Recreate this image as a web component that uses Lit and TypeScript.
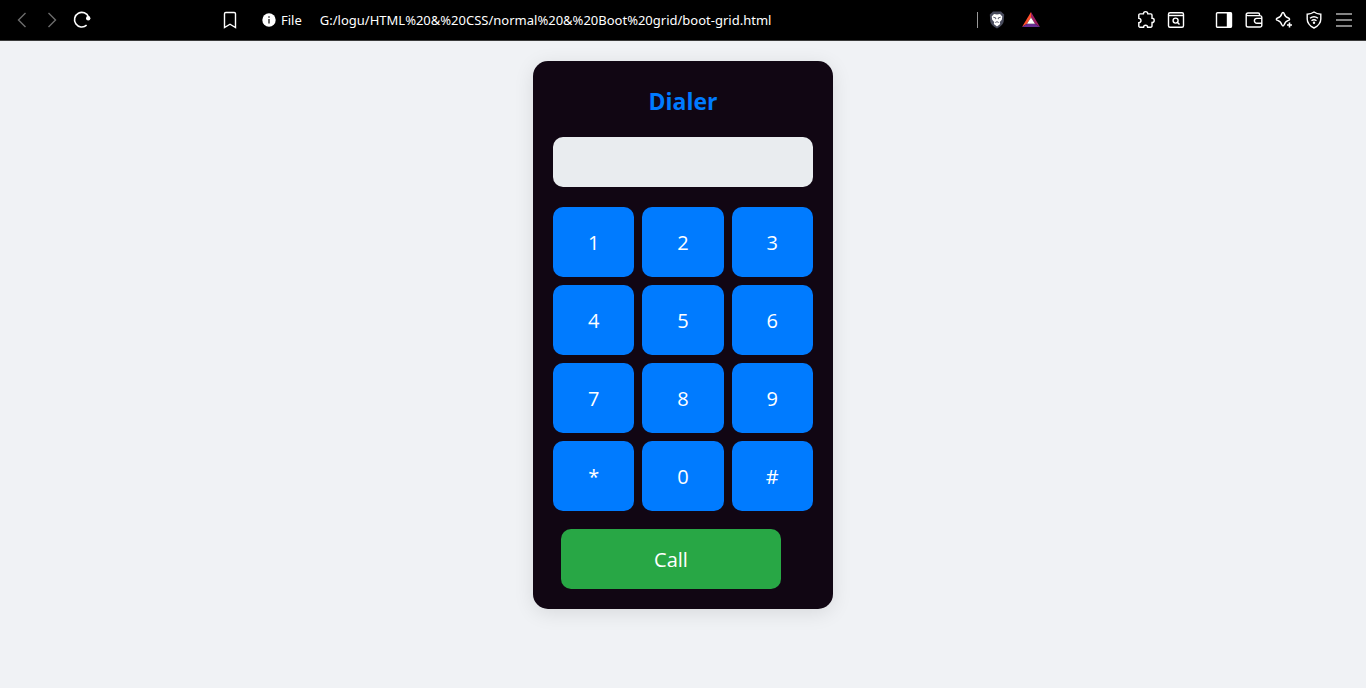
import { LitElement, html, css, svg } from "lit";
import { customElement, state } from "lit/decorators.js";

const icons = {
  back: svg`<path d="M13.500 3 6.500 10l7 7" stroke="#6c6c6c"/>`,
  forward: svg`<path d="m6.500 3 7 7-7 7" stroke="#6c6c6c"/>`,
  reload: svg`<path d="M14.6 15.2A7.3 7.3 0 1 1 16.6 7" stroke-width="1.6"/><circle cx="16.200" cy="8.200" r="2.200" fill="#fff" stroke="none"/>`,
  bookmark: svg`<path d="M4.5 3.8a1.3 1.3 0 0 1 1.3-1.3h8.4a1.3 1.3 0 0 1 1.3 1.3v13.7L10 14.2l-5.5 3.3z"/>`,
  extensions: svg`<path d="M4 3.900h3.400c0-1.400.8-2.300 2.200-2.300s2.200.9 2.200 2.300h3a1.200 1.200 0 0 1 1.200 1.200v3.200c1.400 0 2.200.9 2.200 2.100s-.8 2.100-2.200 2.100v3.500a1.200 1.200 0 0 1-1.200 1.200h-3.200c0-1.200-.7-2-2-2s-2 .8-2 2H4A1.200 1.200 0 0 1 2.800 16v-3.300c1.400 0 2.200-.9 2.200-2.100s-.8-2.200-2.200-2.200V5.100A1.200 1.200 0 0 1 4 3.900z"/>`,
  search: svg`<rect x="2.500" y="2.700" width="15" height="14.600" rx="1.500"/><path d="M2.500 5.500h15"/><circle cx="9.600" cy="10.600" r="2.500"/><path d="m11.500 12.500 2 2"/>`,
  sidebar: svg`<rect x="2.500" y="2.700" width="15" height="14.600" rx="1"/><path d="M13.500 3.500h3.500v13h-3.500z" fill="#fff"/>`,
  wallet: svg`<path d="M15.500 5.600V4.300a1.300 1.300 0 0 0-1.300-1.300H4a1.800 1.800 0 0 0-1.800 1.800v10.400A1.800 1.800 0 0 0 4 17h12a1.800 1.800 0 0 0 1.800-1.800V7.400A1.800 1.800 0 0 0 16 5.600H4A1.600 1.600 0 0 1 2.300 4.600M17.800 8.400h-5a2.400 2.400 0 0 0 0 4.800h5"/>`,
  leo: svg`<path d="M9 2.500c.7 0 1 .5 1.200 1.200.7 2.500 1.700 3.500 4.200 4.300.8.300 1.200.6 1.200 1.200s-.4 1-1.200 1.200c-2.500.8-3.500 1.800-4.200 4.300C10 15.500 9.700 16 9 16s-1-.500-1.200-1.300c-.7-2.500-1.700-3.500-4.200-4.300C2.700 10.200 2.300 9.800 2.300 9.200S2.700 8.300 3.600 8c2.500-.8 3.500-1.800 4.200-4.300C8 3 8.300 2.500 9 2.500z"/><path d="M15.500 12v6M12.500 15h6" stroke="#000" stroke-width="4"/><path d="M15.500 12.500v5M13 15h5" stroke-width="1.600"/>`,
  vpn: svg`<path d="M10 2c2 1.500 4 2 6.800 2.200V9c0 4-2.400 6.800-6.800 9-4.400-2.200-6.800-5-6.800-9V4.200C6 4 8 3.500 10 2z"/><path d="M6 8.300c2.500-2 5.500-2 8 0M7.500 10.700c1.600-1.300 3.400-1.300 5 0"/><circle cx="10" cy="12.800" r="1.200" fill="#fff" stroke="none"/>`,
  menu: svg`<path d="M2 4h16M2 10h16M2 16h16" stroke="#b0b0b0" stroke-width="1.600"/>`,
  shields: svg`<path d="M6 1.500h8l1.500 1.500 1.700 1.500-.5 7c-.4 2.200-2.200 4.500-6.700 7-4.500-2.500-6.300-4.800-6.700-7l-.5-7L4.500 3z" fill="#484b5c" stroke="none"/><path d="m7 4 3 .6L13 4l2.300 2.500-.5 3.200-2 2.400.4 1.800-3.200 2.600-3.200-2.600.4-1.800-2-2.400-.5-3.200z" fill="#fff" stroke="none"/><path d="m6.300 7.200 2.600.8-.4 1.200M13.700 7.200l-2.600.8.400 1.200M8.300 12.500l1.700-.8 1.700.8" stroke="#484b5c" stroke-width=".9"/>`,
  rewards: svg`<g stroke="none"><path d="M10 2 1 17l5-3.200 4-6.300z" fill="#ff4f2b"/><path d="m10 2 9 15-5-3.200-4-6.300z" fill="#9e1f63"/><path d="M1 17h18l-5-3.200H6z" fill="#662d91"/><path d="m10 7.500 4 6.300H6z" fill="#fff"/></g>`,
};

type IconName = keyof typeof icons;

@customElement("browser-bar")
export class BrowserBar extends LitElement {
  static styles = css`
    :host {
      display: block;
      font-family: "Segoe UI", "Noto Sans", "Open Sans", sans-serif;
    }
    .bar {
      display: flex;
      align-items: center;
      height: 40px;
      padding: 0 12px;
      background: #000;
      border-bottom: 1px solid #3b3b3b;
      color: #fff;
    }
    .group {
      display: flex;
      align-items: center;
      gap: 10px;
      flex: none;
    }
    .tool {
      display: block;
      width: 20px;
      height: 20px;
      padding: 0;
      border: 0;
      background: none;
      flex: none;
    }
    .glyph {
      display: block;
      width: 20px;
      height: 20px;
      fill: none;
      stroke: #fff;
      stroke-width: 1.4;
    }
    .location {
      display: flex;
      align-items: center;
      flex: 1;
      min-width: 0;
      margin: 0 95px 0 128px;
    }
    .site {
      display: flex;
      align-items: center;
      gap: 5px;
      margin: 0 18px 0 22px;
      padding: 0;
      border: 0;
      background: none;
      color: inherit;
      font: inherit;
      font-size: 13px;
      line-height: 20px;
    }
    .info {
      width: 14px;
      height: 14px;
    }
    .url {
      flex: 1;
      min-width: 0;
      padding: 0;
      border: 0;
      outline: 0;
      background: none;
      color: inherit;
      font: inherit;
      font-size: 13px;
      line-height: 20px;
    }
    .badges {
      display: flex;
      align-items: center;
      gap: 14px;
      padding-left: 10px;
      background: linear-gradient(#999, #999) left center / 1px 16px no-repeat;
    }
    .panels {
      margin-left: 28px;
    }
  `;

  private tool(name: IconName, label: string) {
    return html`<button class="tool" type="button" aria-label=${label}>
      <svg class="glyph" viewBox="0 0 20 20" aria-hidden="true">${icons[name]}</svg>
    </button>`;
  }

  render() {
    return html`<header class="bar">
      <nav class="group">
        ${this.tool("back", "Back")}${this.tool("forward", "Forward")}${this.tool("reload", "Reload")}
      </nav>
      <div class="location">
        ${this.tool("bookmark", "Bookmark")}
        <button class="site" type="button">
          <svg class="info" viewBox="0 0 14 14" aria-hidden="true">
            <circle cx="7" cy="7" r="6.700" fill="#fff" />
            <path d="M7 3.200v1.600M7 6v4.500" stroke="#333" stroke-width="1.500" />
          </svg>
          <span>File</span>
        </button>
        <input
          class="url"
          type="text"
          aria-label="Address"
          spellcheck="false"
          .value=${"G:/logu/HTML%20&%20CSS/normal%20&%20Boot%20grid/boot-grid.html"}
        />
        <div class="badges">
          ${this.tool("shields", "Shields")}${this.tool("rewards", "Rewards")}
        </div>
      </div>
      <div class="group">
        ${this.tool("extensions", "Extensions")}${this.tool("search", "Search tabs")}
      </div>
      <div class="group panels">
        ${this.tool("sidebar", "Sidebar")}${this.tool("wallet", "Wallet")}${this.tool("leo", "Assistant")}
        ${this.tool("vpn", "VPN")}${this.tool("menu", "Menu")}
      </div>
    </header>`;
  }
}

@customElement("phone-dialer")
export class PhoneDialer extends LitElement {
  static styles = css`
    :host {
      display: block;
      font-family: "Segoe UI", "Open Sans", "Noto Sans", sans-serif;
    }
    .card {
      box-sizing: border-box;
      width: 300px;
      max-width: 100%;
      padding: 20px;
      border-radius: 15px;
      background: #110613;
      box-shadow: 0 4px 20px rgba(0, 0, 0, 0.1);
    }
    .title {
      margin: 0 0 16px;
      color: #007bff;
      font-size: 23px;
      font-weight: 700;
      line-height: 40px;
      text-align: center;
    }
    .display {
      display: block;
      box-sizing: border-box;
      width: 100%;
      height: 50px;
      margin-bottom: 20px;
      padding: 0 10px;
      border: 0;
      border-radius: 10px;
      outline: 0;
      background: #e9ecef;
      font: inherit;
      font-size: 24px;
      text-align: right;
    }
    .keys {
      display: grid;
      grid-template-columns: repeat(3, 1fr);
      gap: 8px;
    }
    .key,
    .call {
      padding: 2px 0 0;
      border: 0;
      border-radius: 10px;
      color: #fff;
      font: inherit;
      font-size: 20px;
      line-height: 30px;
      cursor: pointer;
    }
    .key {
      height: 70px;
      background: #007bff;
    }
    .call {
      display: block;
      width: 220px;
      height: 60px;
      margin: 18px 0 0 8px;
      background: #28a745;
    }
  `;

  @state() private number = "";

  render() {
    return html`<section class="card">
      <h1 class="title">Dialer</h1>
      <input class="display" type="text" aria-label="Phone number" readonly .value=${this.number} />
      <div class="keys">
        ${[..."123456789*0#"].map(
          (key) => html`<button class="key" type="button" @click=${() => (this.number += key)}>${key}</button>`
        )}
      </div>
      <button class="call" type="button">Call</button>
    </section>`;
  }
}

@customElement("app-root")
export class AppRoot extends LitElement {
  static styles = css`
    :host {
      display: flex;
      flex-direction: column;
      min-height: 100vh;
      background: #f0f2f5;
    }
    .page {
      display: flex;
      justify-content: center;
      padding: 20px;
    }
  `;

  render() {
    return html`<browser-bar></browser-bar>
      <main class="page"><phone-dialer></phone-dialer></main>`;
  }
}
